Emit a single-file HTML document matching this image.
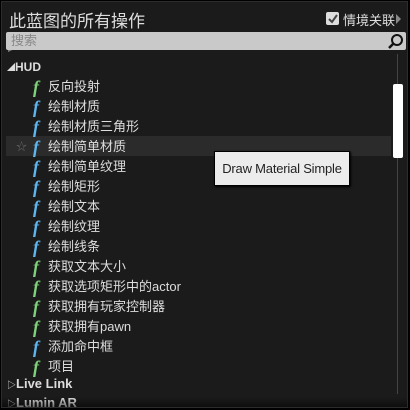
<html><head><style>
body{margin:0;width:410px;height:410px;background:#000;overflow:hidden;font-family:"Liberation Sans","Noto Sans CJK SC",sans-serif}
#w{position:absolute;left:1px;top:1px;width:407px;height:407px;background:#1b1b1b;border:1px solid #2c2c2c;box-sizing:border-box;overflow:hidden}
.t{position:absolute;left:7px;top:5px;font-size:17px;color:#ddd}
.ctx{position:absolute;left:325px;top:8px;color:#ddd;font-size:13px}
.cb{position:absolute;left:324px;top:10px;width:13px;height:13px;background:#ddd;border-radius:2px}
.s{position:absolute;left:4px;top:30px;width:400px;height:18px;background:#c9c9c9;border-radius:2px;font-size:13px;color:#888;line-height:18px;padding-left:5px;box-sizing:border-box}
.r{position:absolute;left:0;height:20px;line-height:20px;font-size:13px;color:#ddd;white-space:nowrap}
.f{position:absolute;left:31px;font-family:"Liberation Serif",serif;font-style:italic;font-weight:bold;font-size:18px}
.g{color:#7ed37a}.b{color:#5db6f0}
.n{position:absolute;left:46px}
.h{font-weight:bold;color:#ddd;font-size:13px}
</style></head><body><div id="w">
<div class="t">此蓝图的所有操作</div>
<div class="cb"><svg width="13" height="13"><path d="M3 7l3 3 5-7" stroke="#444" stroke-width="2" fill="none"/></svg></div>
<div class="ctx" style="left:341px">情境关联</div>
<div style="position:absolute;left:394px;top:12px;width:0;height:0;border-left:5px solid #888;border-top:5px solid transparent;border-bottom:5px solid transparent"></div>
<div style="position:absolute;left:6px;top:48px;width:40px;height:4px;overflow:hidden"><div style="margin-top:-9px;font-size:12px;font-weight:bold;color:#777">▸ FOUO</div></div>
<div class="s">搜索<svg style="position:absolute;right:2px;top:1px" width="16" height="16"><circle cx="9" cy="7" r="5" stroke="#111" stroke-width="2" fill="none"/><path d="M5 11l-4 4" stroke="#111" stroke-width="2.5"/></svg></div>
<div style="position:absolute;left:395px;top:52px;width:1px;height:340px;background:#444"></div>
<div style="position:absolute;left:391px;top:82px;width:10px;height:74px;background:#fff;border-radius:2px"></div>
<div style="position:absolute;left:4px;top:134px;width:385px;height:20px;background:#2b2b2b"></div>
<div class="r h" style="top:55px;left:5px"><span style="font-size:8px;font-weight:normal;vertical-align:1px">◢</span><span style="font-size:12px">HUD</span></div>
<div class="r" style="top:75px"><span class="f g">f</span><span class="n">反向投射</span></div>
<div class="r" style="top:95px"><span class="f b">f</span><span class="n">绘制材质</span></div>
<div class="r" style="top:115px"><span class="f b">f</span><span class="n">绘制材质三角形</span></div>
<div class="r" style="top:135px"><span style="position:absolute;left:14px;color:#666;font-size:11px">☆</span><span class="f b">f</span><span class="n">绘制简单材质</span></div>
<div class="r" style="top:155px"><span class="f b">f</span><span class="n">绘制简单纹理</span></div>
<div class="r" style="top:175px"><span class="f b">f</span><span class="n">绘制矩形</span></div>
<div class="r" style="top:195px"><span class="f b">f</span><span class="n">绘制文本</span></div>
<div class="r" style="top:215px"><span class="f b">f</span><span class="n">绘制纹理</span></div>
<div class="r" style="top:235px"><span class="f b">f</span><span class="n">绘制线条</span></div>
<div class="r" style="top:255px"><span class="f g">f</span><span class="n">获取文本大小</span></div>
<div class="r" style="top:275px"><span class="f g">f</span><span class="n">获取选项矩形中的actor</span></div>
<div class="r" style="top:295px"><span class="f g">f</span><span class="n">获取拥有玩家控制器</span></div>
<div class="r" style="top:315px"><span class="f g">f</span><span class="n">获取拥有pawn</span></div>
<div class="r" style="top:335px"><span class="f b">f</span><span class="n">添加命中框</span></div>
<div class="r" style="top:355px"><span class="f g">f</span><span class="n">项目</span></div>
<div class="r h" style="top:372px;left:5px"><span style="font-size:9px;font-weight:normal">▷</span>Live Link</div>
<div class="r h" style="top:391px;left:5px"><span style="font-size:9px;font-weight:normal">▷</span>Lumin AR</div>
<div style="position:absolute;left:0;top:395px;width:407px;height:12px;background:linear-gradient(rgba(0,0,0,0),rgba(0,0,0,.6))"></div>
<div style="position:absolute;left:212px;top:149px;width:134px;height:33px;background:#ececec;border:1px solid #000;box-shadow:1px 1px 2px #000;font-size:13px;color:#222;line-height:33px;text-align:center;letter-spacing:-0.2px">Draw Material Simple</div>
</div></body></html>
